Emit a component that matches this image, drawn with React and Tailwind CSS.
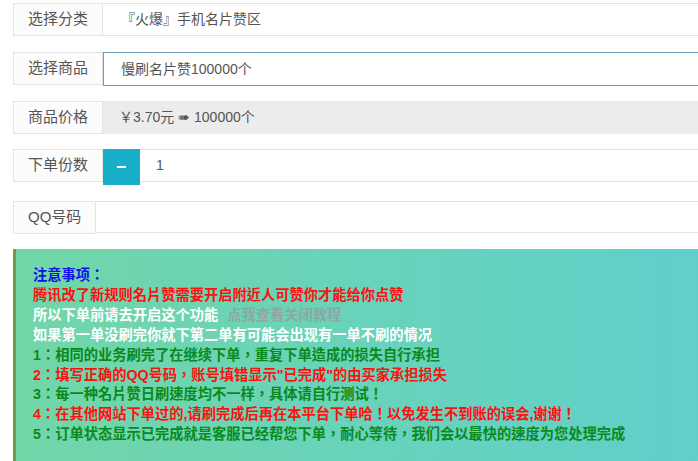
import React from 'react';

const font = { fontFamily: '"Liberation Sans", "Noto Sans CJK SC", sans-serif' };
const noteFont = { fontFamily: '"Liberation Sans", "Noto Sans CJK TC", sans-serif' };

const Label = ({ children }) => (
  <div className="flex h-[33px] shrink-0 items-center justify-center border border-[#e3e3e3] bg-[#fcfcfc] px-[14px] text-[15px] text-[#555]">
    {children}
  </div>
);

const Row = ({ label, children, className = '' }) => (
  <div className={`flex items-start ${className}`}>
    <Label>{label}</Label>
    {children}
  </div>
);

const notes = [
  { text: '1：相同的业务刷完了在继续下单，重复下单造成的损失自行承担', color: 'text-[#0a8a1a]' },
  { text: '2：填写正确的QQ号码，账号填错显示"已完成"的由买家承担损失', color: 'text-[#ff1010]' },
  { text: '3：每一种名片赞日刷速度均不一样，具体请自行测试！', color: 'text-[#0a8a1a]' },
  { text: '4：在其他网站下单过的,请刷完成后再在本平台下单哈！以免发生不到账的误会,谢谢！', color: 'text-[#ff1010]' },
  { text: '5：订单状态显示已完成就是客服已经帮您下单，耐心等待，我们会以最快的速度为您处理完成', color: 'text-[#0a8a1a]' },
];

export default function App() {
  return (
    <div className="h-[461px] w-[698px] overflow-hidden bg-white" style={font}>
      <div className="w-[720px] pl-[13px] pt-[3px]">
        <Row label="选择分类">
          <div className="flex h-[33px] flex-1 items-center border-y border-r border-[#e3e3e3] pl-[18px] text-[14px] text-[#555]">
            『火爆』手机名片赞区
          </div>
        </Row>

        <Row label="选择商品" className="mt-[16px]">
          <div className="flex h-[34px] flex-1 items-center border border-[#6d9dbd] pl-[17px] text-[14px] text-[#555]">
            慢刷名片赞100000个
          </div>
        </Row>

        <Row label="商品价格" className="mt-[15px]">
          <div className="flex h-[33px] flex-1 items-center bg-[#ececec] pl-[16px] text-[14px] text-[#555]">
            ￥3.70元 ➠ 100000个
          </div>
        </Row>

        <Row label="下单份数" className="mt-[15px]">
          <button className="flex h-[36px] w-[37px] shrink-0 items-center justify-center bg-[#1aafc8] text-white">
            <span className="block h-[2px] w-[9px] bg-white" />
          </button>
          <div className="flex h-[33px] flex-1 items-center border-y border-r border-[#e3e3e3] pl-[16px] text-[14px] text-[#555]">
            1
          </div>
        </Row>

        <Row label="QQ号码" className="mt-[16px]">
          <div className="h-[32px] flex-1 border-y border-r border-[#e3e3e3]" />
        </Row>

        <div
          className="mt-[15px] h-[230px] border-l-[3px] border-[#6e9b52] bg-linear-to-r from-[#71d6a8] to-[#60cfcc] pl-[17px] pt-[17px] text-[14.25px] font-bold leading-[19.9px]"
          style={noteFont}
        >
          <div className="text-[#1010ee]">注意事项：</div>
          <div className="text-[#ff1010]">腾讯改了新规则名片赞需要开启附近人可赞你才能给你点赞</div>
          <div className="text-white">
            所以下单前请去开启这个功能
            <span className="ml-[9px] text-[#8aa9a2]">点我查看关闭教程</span>
          </div>
          <div className="text-white">如果第一单没刷完你就下第二单有可能会出现有一单不刷的情况</div>
          {notes.map((n) => (
            <div key={n.text} className={n.color}>
              {n.text}
            </div>
          ))}
        </div>
      </div>
    </div>
  );
}
